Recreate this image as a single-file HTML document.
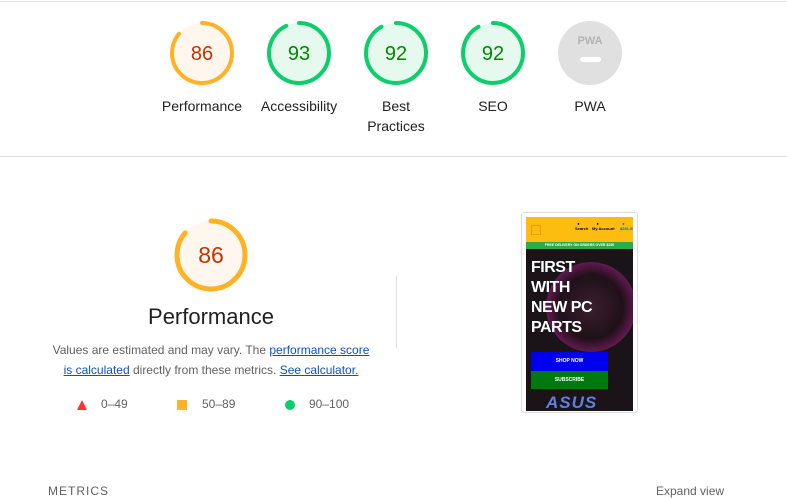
<!DOCTYPE html>
<html><head><meta charset="utf-8"><style>
body{margin:0;width:787px;height:493px;overflow:hidden;background:#fff;font-family:"Liberation Sans",Arial,sans-serif;color:#212121;position:relative}
.abs{position:absolute}
.lbl{position:absolute;width:100px;text-align:center;font-size:14px;line-height:20px;color:#212121}
a{color:#0c50c7;text-decoration:underline}
</style></head><body>
<div class="abs" style="left:0;top:1px;width:787px;height:1px;background:#e0e0e0"></div>
<div class="abs" style="left:0;top:156px;width:787px;height:1px;background:#e0e0e0"></div>

<svg class="abs" style="left:0;top:0" width="787" height="160">
 <g font-family="Liberation Sans, Arial, sans-serif" font-size="20" text-anchor="middle">
  <circle cx="202" cy="53" r="30" fill="#fff7ed" stroke="none"/>
  <circle cx="202" cy="53" r="30" fill="none" stroke="#ffa400" stroke-width="4" stroke-dasharray="162 200" transform="rotate(-90 202 53)" stroke-linecap="round" opacity=".85"/>
  <text x="202" y="60" fill="#c33300">86</text>
  <circle cx="299" cy="53" r="30" fill="#e6f9ee"/>
  <circle cx="299" cy="53" r="30" fill="none" stroke="#0cce6b" stroke-width="4" stroke-dasharray="175 200" transform="rotate(-90 299 53)" stroke-linecap="round"/>
  <text x="299" y="60" fill="#008800">93</text>
  <circle cx="396" cy="53" r="30" fill="#e6f9ee"/>
  <circle cx="396" cy="53" r="30" fill="none" stroke="#0cce6b" stroke-width="4" stroke-dasharray="173 200" transform="rotate(-90 396 53)" stroke-linecap="round"/>
  <text x="396" y="60" fill="#008800">92</text>
  <circle cx="493" cy="53" r="30" fill="#e6f9ee"/>
  <circle cx="493" cy="53" r="30" fill="none" stroke="#0cce6b" stroke-width="4" stroke-dasharray="173 200" transform="rotate(-90 493 53)" stroke-linecap="round"/>
  <text x="493" y="60" fill="#008800">92</text>
  <circle cx="590" cy="53" r="32" fill="#e0e0e0"/>
  <text x="590" y="44" fill="#b3b3b3" font-size="11" font-weight="bold">PWA</text>
  <rect x="580" y="57" width="21" height="5" rx="2.5" fill="#fff"/>
 </g>
</svg>
<div class="lbl" style="left:152px;top:96px">Performance</div>
<div class="lbl" style="left:249px;top:96px">Accessibility</div>
<div class="lbl" style="left:346px;top:96px">Best<br>Practices</div>
<div class="lbl" style="left:443px;top:96px">SEO</div>
<div class="lbl" style="left:540px;top:96px">PWA</div>

<svg class="abs" style="left:170px;top:214px" width="84" height="84">
 <circle cx="41" cy="41" r="34" fill="#fff7ed"/>
 <circle cx="41" cy="41" r="34" fill="none" stroke="#ffa400" stroke-width="5" stroke-dasharray="184 220" transform="rotate(-90 41 41)" stroke-linecap="round" opacity=".85"/>
 <text x="41" y="49" text-anchor="middle" font-family="Liberation Sans, Arial, sans-serif" font-size="23" fill="#c33300">86</text>
</svg>
<div class="abs" style="left:61px;top:304px;width:300px;text-align:center;font-size:22px;color:#212121">Performance</div>
<div class="abs" style="left:50px;top:340px;width:322px;text-align:center;font-size:12px;line-height:20px;color:#616161">Values are estimated and may vary. The <a>performance score is calculated</a> directly from these metrics. <a>See calculator.</a></div>

<div class="abs" style="left:77px;top:400px;width:0;height:0;border-left:5px solid transparent;border-right:5px solid transparent;border-bottom:10px solid #ff3333"></div>
<div class="abs" style="left:101px;top:397px;font-size:12px;color:#616161">0–49</div>
<div class="abs" style="left:177px;top:400px;width:10px;height:10px;background:#ffa400;opacity:.85"></div>
<div class="abs" style="left:202px;top:397px;font-size:12px;color:#616161">50–89</div>
<div class="abs" style="left:285px;top:400px;width:10px;height:10px;border-radius:50%;background:#0cce6b"></div>
<div class="abs" style="left:309px;top:397px;font-size:12px;color:#616161">90–100</div>

<div class="abs" style="left:396px;top:276px;width:1px;height:72px;background:#e0e0e0"></div>

<div class="abs" style="left:521px;top:212px;width:115px;height:199px;border:1px solid #ddd;border-radius:3px;background:#fff"></div>
<div class="abs" style="left:526px;top:217px;width:107px;height:194px;overflow:hidden;background:#1a1418">
 <div class="abs" style="left:0;top:0;width:107px;height:25px;background:#fcbc10"></div>
 <div class="abs" style="left:5px;top:8px;width:8px;height:8px;border:1px solid #e0a400;font-size:6px"></div>
 <div class="abs" style="left:49px;top:4px;font-size:4px;font-weight:bold;color:#000">&nbsp;&nbsp;●<br>Search</div>
 <div class="abs" style="left:66px;top:4px;font-size:4px;font-weight:bold;color:#000">&nbsp;&nbsp;&nbsp;&nbsp;●<br>My Account</div>
 <div class="abs" style="left:94px;top:4px;font-size:4px;font-weight:bold;color:#1565c0">&nbsp;&nbsp;●<br>$281.00</div>
 <div class="abs" style="left:0;top:25px;width:107px;height:7px;background:#2eaa4a;color:#fff;font-size:3.5px;text-align:center;line-height:7px;font-weight:bold">FREE DELIVERY ON ORDERS OVER $250</div>
 <div class="abs" style="left:20px;top:45px;width:90px;height:90px;border-radius:50%;background:radial-gradient(circle,#3a2030 0%,#201018 50%,#601a50 70%,#1a1418 75%)"></div>
 <div class="abs" style="left:5px;top:41px;font-size:16px;line-height:20px;font-weight:bold;color:#fff;letter-spacing:-0.5px;font-family:'Liberation Sans Narrow','Liberation Sans',sans-serif">FIRST<br>WITH<br>NEW PC<br>PARTS</div>
 <div class="abs" style="left:5px;top:135px;width:77px;height:19px;background:#0000ee;color:#fff;font-size:5px;font-weight:bold;text-align:center;line-height:19px">SHOP NOW</div>
 <div class="abs" style="left:5px;top:154px;width:77px;height:18px;background:#007a10;color:#fff;font-size:5px;font-weight:bold;text-align:center;line-height:18px">SUBSCRIBE</div>
 <div class="abs" style="left:20px;top:176px;font-size:17px;font-weight:bold;font-style:italic;color:#6080e0;letter-spacing:1px">ASUS</div>
</div>

<div class="abs" style="left:48px;top:484px;font-size:12px;letter-spacing:1px;color:#616161">METRICS</div>
<div class="abs" style="left:656px;top:484px;font-size:12px;color:#616161">Expand view</div>
</body></html>
